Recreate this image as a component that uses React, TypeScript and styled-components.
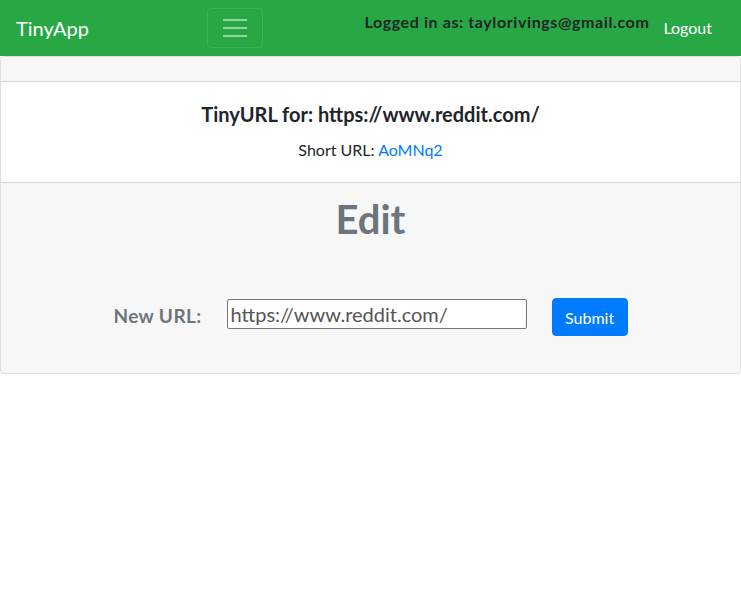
import React from "react";
import styled, { createGlobalStyle } from "styled-components";

const Global = createGlobalStyle`
  * { box-sizing: border-box; }
  body {
    margin: 0;
    font-family: Lato, "Open Sans", "Noto Sans", sans-serif;
    font-size: 16px;
    line-height: 1.5;
    color: #212529;
    background: #fff;
  }
`;

const Navbar = styled.nav`
  display: flex;
  align-items: center;
  justify-content: space-between;
  height: 56px;
  padding: 8px 16px;
  background: #28a745;
`;

const Brand = styled.a`
  font-size: 20px;
  line-height: 30px;
  color: #fff;
  margin-right: 16px;
  text-decoration: none;
`;

const Toggler = styled.button`
  width: 56px;
  height: 40px;
  padding: 0;
  display: flex;
  flex-direction: column;
  align-items: center;
  justify-content: center;
  gap: 6px;
  background: transparent;
  border: 1px solid rgba(255, 255, 255, 0.1);
  border-radius: 4px;
`;

const TogglerBar = styled.span`
  display: block;
  width: 24px;
  height: 2px;
  background: rgba(255, 255, 255, 0.5);
`;

const NavRight = styled.div`
  display: flex;
  align-items: center;
  margin-right: 5px;
`;

const LoggedIn = styled.span`
  font-weight: 700;
  font-size: 16px;
  letter-spacing: 0.6px;
  color: #212529;
  margin-bottom: 13px;
  margin-right: 6px;
`;

const NavLink = styled.a`
  color: #fff;
  padding: 8px;
  text-decoration: none;
`;

const Card = styled.div`
  border: 1px solid rgba(0, 0, 0, 0.125);
  border-radius: 4px;
  overflow: hidden;
  text-align: center;
`;

const CardHeader = styled.div`
  height: 25px;
  background: rgba(0, 0, 0, 0.03);
  border-bottom: 1px solid rgba(0, 0, 0, 0.125);
`;

const CardBody = styled.div`
  padding: 20px;
`;

const CardTitle = styled.h5`
  margin: 0 0 12px;
  font-size: 20px;
  font-weight: 700;
  line-height: 1.2;
`;

const CardText = styled.p`
  margin: 0;
`;

const Link = styled.a`
  color: #007bff;
  text-decoration: none;
`;

const CardFooter = styled.div`
  padding: 12px 20px 37px;
  background: rgba(0, 0, 0, 0.03);
  border-top: 1px solid rgba(0, 0, 0, 0.125);
`;

const Heading = styled.h1`
  margin: 0 0 55px;
  font-size: 40px;
  font-weight: 700;
  line-height: 48px;
  color: #6c757d;
`;

const Form = styled.form`
  display: flex;
  align-items: center;
  justify-content: center;
  gap: 25px;
  height: 38px;
`;

const Label = styled.label`
  font-size: 19px;
  font-weight: 700;
  letter-spacing: 0.4px;
  color: #6c757d;
  margin-top: -2px;
`;

const Input = styled.input`
  width: 300px;
  height: 30px;
  margin-top: -7px;
  padding: 1px 3px;
  font-family: inherit;
  font-size: 20px;
  color: #555;
  background: #fff;
  border: 1px solid #767676;
  border-radius: 2px;
`;

const Button = styled.button`
  width: 76px;
  height: 38px;
  font-family: inherit;
  font-size: 16px;
  color: #fff;
  background: #007bff;
  border: 1px solid #007bff;
  border-radius: 4px;
`;

export default function App() {
  return (
    <>
      <Global />
      <Navbar>
        <Brand href="#">TinyApp</Brand>
        <Toggler type="button" aria-label="Toggle navigation">
          <TogglerBar />
          <TogglerBar />
          <TogglerBar />
        </Toggler>
        <NavRight>
          <LoggedIn>Logged in as: taylorivings@gmail.com</LoggedIn>
          <NavLink href="#">Logout</NavLink>
        </NavRight>
      </Navbar>
      <Card>
        <CardHeader />
        <CardBody>
          <CardTitle>TinyURL for: https://www.reddit.com/</CardTitle>
          <CardText>
            Short URL: <Link href="#">AoMNq2</Link>
          </CardText>
        </CardBody>
        <CardFooter>
          <Heading>Edit</Heading>
          <Form onSubmit={(e) => e.preventDefault()}>
            <Label htmlFor="longURL">New URL:</Label>
            <Input id="longURL" type="text" defaultValue="https://www.reddit.com/" />
            <Button type="submit">Submit</Button>
          </Form>
        </CardFooter>
      </Card>
    </>
  );
}
